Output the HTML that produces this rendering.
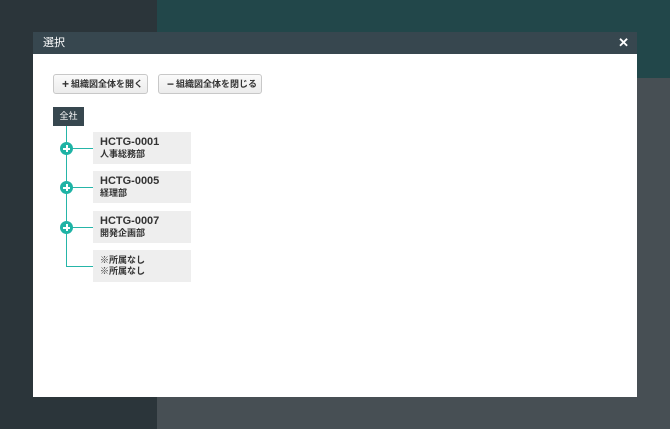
<!DOCTYPE html>
<html><head><meta charset="utf-8"><style>
*{margin:0;padding:0;box-sizing:border-box}
body{width:670px;height:429px;position:relative;overflow:hidden;background:#474f54;font-family:"Liberation Sans","Noto Sans CJK JP",sans-serif}
.side{position:absolute;left:0;top:0;width:157px;height:429px;background:#2b353a}
.top{position:absolute;left:157px;top:0;width:513px;height:78px;background:#22474a}
.modal{position:absolute;left:33px;top:32px;width:604px;height:365px;background:#fff}
.hd{height:22px;background:#37474f;color:#fff;font-size:11px;line-height:22px;padding-left:10px;position:relative}
.hd .x{position:absolute;right:8px;top:0;font-weight:bold;font-size:13px}
.btn{position:absolute;top:42px;height:20px;border:1px solid #c8c8c8;border-radius:3px;background:linear-gradient(#fafafa,#ececec);font-size:9px;line-height:18px;color:#333;padding-left:8px;font-weight:bold}
.btn span{font-size:12px;vertical-align:-1px;margin-right:2px}
.root{position:absolute;left:20px;top:75px;width:31px;height:19px;background:#37474f;color:#fff;font-size:9px;line-height:19px;text-align:center}
.vl{position:absolute;left:33px;top:94px;width:1px;height:140px;background:#26b5a8}
.hl{position:absolute;left:33px;width:27px;height:1px;background:#26b5a8}
.pl{position:absolute;left:27px;width:13px;height:13px;border-radius:50%;background:#1fb3a5}
.pl:before{content:"";position:absolute;left:3px;top:5.5px;width:7px;height:2px;background:#fff}
.pl:after{content:"";position:absolute;left:5.5px;top:3px;width:2px;height:7px;background:#fff}
.box{position:absolute;left:60px;width:98px;height:32px;background:#eee;font-size:9px;color:#333;padding:4px 0 0 7px;line-height:11px;font-weight:bold}
.box b{font-size:11px;display:block;line-height:13px}
</style></head><body>
<div class="side"></div><div class="top"></div>
<div class="modal">
<div class="hd">選択<span class="x">✕</span></div>
<div class="btn" style="left:20px;width:95px"><span>+</span>組織図全体を開く</div>
<div class="btn" style="left:125px;width:104px"><span>−</span>組織図全体を閉じる</div>
<div class="root">全社</div>
<div class="vl"></div>
<div class="hl" style="top:116px"></div><div class="pl" style="top:110px"></div>
<div class="box" style="top:100px"><b>HCTG-0001</b>人事総務部</div>
<div class="hl" style="top:155px"></div><div class="pl" style="top:149px"></div>
<div class="box" style="top:139px"><b>HCTG-0005</b>経理部</div>
<div class="hl" style="top:195px"></div><div class="pl" style="top:189px"></div>
<div class="box" style="top:179px"><b>HCTG-0007</b>開発企画部</div>
<div class="hl" style="top:234px"></div>
<div class="box" style="top:218px;padding-top:5px">※所属なし<br>※所属なし</div>
</div>
</body></html>
